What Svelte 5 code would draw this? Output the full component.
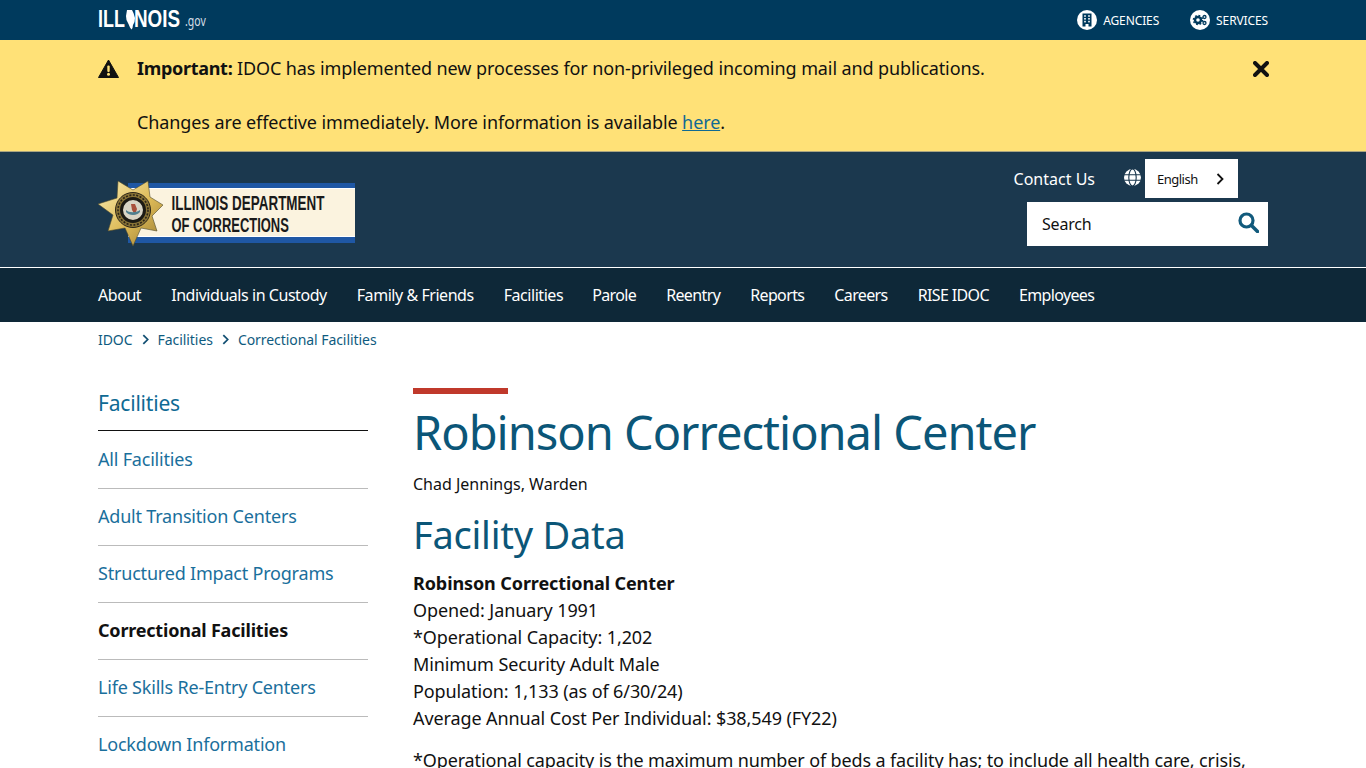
<script>
  const nav = ['About','Individuals in Custody','Family & Friends','Facilities','Parole','Reentry','Reports','Careers','RISE IDOC','Employees'];
  const side = [['All Facilities',0],['Adult Transition Centers',0],['Structured Impact Programs',0],['Correctional Facilities',1],['Life Skills Re-Entry Centers',0],['Lockdown Information',0]];
</script>

<div class="page">
  <div class="topbar">
    <div class="wrap row between">
      <svg class="illinois" viewBox="0 0 110 40" width="110" height="40">
        <text transform="translate(0 27) scale(.78 1)" class="ilt">ILL</text>
        <path d="M29 10h5l1.500 3 1.500 5-.5 4-1.500 3-.5 3-1 1.500-1.500-2-1.500-3.500-2-4-.5-4z" fill="#fff"/>
        <text transform="translate(36 27) scale(.82 1)" class="ilt">NOIS</text>
        <text transform="translate(87 26) scale(.7 1)" class="gv">.gov</text>
      </svg>
      <div class="row toplinks">
        <a class="tl"><span class="disc"><svg viewBox="0 0 20 20" width="20" height="20"><path d="M5.500 3.500h9v13h-3v-2.500h-3v2.500h-3z" fill="#003a5d"/><g fill="#fff"><rect x="7.200" y="5.200" width="1.600" height="1.600"/><rect x="11.200" y="5.200" width="1.600" height="1.600"/><rect x="7.200" y="8" width="1.600" height="1.600"/><rect x="11.200" y="8" width="1.600" height="1.600"/><rect x="7.200" y="10.800" width="1.600" height="1.600"/><rect x="11.200" y="10.800" width="1.600" height="1.600"/></g></svg></span>AGENCIES</a>
        <a class="tl"><span class="disc"><svg viewBox="0 0 20 20" width="20" height="20"><circle cx="8" cy="10" r="3" fill="none" stroke="#003a5d" stroke-width="2.400"/><circle cx="8" cy="10" r="4.600" fill="none" stroke="#003a5d" stroke-width="1.400" stroke-dasharray="1.800 1.800"/><circle cx="14.500" cy="7" r="1.500" fill="none" stroke="#003a5d" stroke-width="1.300"/><circle cx="14.500" cy="13" r="1.500" fill="none" stroke="#003a5d" stroke-width="1.300"/></svg></span>SERVICES</a>
      </div>
    </div>
  </div>

  <div class="alert">
    <div class="wrap alert-in">
      <svg class="warn" viewBox="0 0 21 19" width="21" height="19"><path d="M10.500 1 20.500 18.500H.5z" fill="#111" stroke="#111" stroke-width="1" stroke-linejoin="round"/><rect x="9.300" y="6.500" width="2.400" height="6.500" rx="1" fill="#ffe177"/><circle cx="10.500" cy="15.300" r="1.500" fill="#ffe177"/></svg>
      <div class="alert-text">
        <p><b>Important:</b> IDOC has implemented new processes for non-privileged incoming mail and publications.</p>
        <p>Changes are effective immediately. More information is available <a>here</a>.</p>
      </div>
      <svg class="close" viewBox="0 0 16 16" width="16" height="16"><path d="M2 2l12 12M14 2 2 14" stroke="#111" stroke-width="4" stroke-linecap="round"/></svg>
    </div>
  </div>

  <header class="masthead">
    <div class="wrap row between mast-in">
      <svg class="logo" viewBox="0 0 260 70" width="260" height="70">
        <defs>
          <linearGradient id="gold" x1="0" y1="0" x2="1" y2="1">
            <stop offset="0" stop-color="#fbeeb4"/><stop offset=".55" stop-color="#dcb956"/><stop offset="1" stop-color="#9a7c33"/>
          </linearGradient>
        </defs>
        <rect x="30" y="4" width="227" height="60" fill="#1f57a4"/>
        <rect x="30" y="9" width="227" height="49" fill="#fff"/>
        <rect x="30" y="10" width="227" height="47" fill="#fbf3df"/>
        <polygon points="20,2 35,11 50,2 52,18 65,26 54,37 59,52 43,49 35,67 27,49 10,52 15,36 0,25 19,19" fill="url(#gold)" stroke="#4f4a2c" stroke-width=".6"/>
        <circle cx="35" cy="31" r="17.500" fill="#8a7436" stroke="#2b2418" stroke-width="1"/>
        <circle cx="35" cy="31" r="15" fill="none" stroke="#2b2418" stroke-width="1.600" stroke-dasharray="2 1.500"/>
        <circle cx="35" cy="31" r="11.500" fill="#d9d5c6" stroke="#1c1a14" stroke-width="3"/>
        <path d="M33 25h4l2 5-2 6-3-5z" fill="#a8503c"/>
        <path d="M28 31c3 3 10 3 14 0v2c-3 4-11 4-14 0z" fill="#4f7f8f"/>
        <text transform="translate(73.500 30.500) scale(.69 1)" class="logot">ILLINOIS DEPARTMENT</text>
        <text transform="translate(73.500 53) scale(.665 1)" class="logot">OF CORRECTIONS</text>
      </svg>
      <div class="tools">
        <div class="row tools-top">
          <a class="contact">Contact Us</a>
          <svg class="globe" viewBox="0 0 17 17" width="17" height="17"><circle cx="8.500" cy="8.500" r="8.500" fill="#fff"/><g fill="none" stroke="#1b384e" stroke-width="1.100"><ellipse cx="8.500" cy="8.500" rx="3.700" ry="8.500"/><path d="M0 5.700h17M0 11.300h17"/></g></svg>
          <div class="lang"><span>English</span><svg viewBox="0 0 8 12" width="8" height="12"><path d="M1.500 1l5 5-5 5" fill="none" stroke="#111" stroke-width="1.800"/></svg></div>
        </div>
        <div class="search"><span>Search</span><svg viewBox="0 0 21 21" width="21" height="21"><circle cx="8.500" cy="8.500" r="6.500" fill="none" stroke="#115a7c" stroke-width="3.200"/><path d="M13.500 13.500l6 6" stroke="#115a7c" stroke-width="3.600" stroke-linecap="round"/></svg></div>
      </div>
    </div>
  </header>

  <nav class="mainnav"><div class="wrap row navrow">{#each nav as n}<a>{n}</a>{/each}</div></nav>

  <div class="wrap crumbs">
    <a>IDOC</a><svg viewBox="0 0 8 12" width="7" height="11"><path d="M1.500 1l5 5-5 5" fill="none" stroke="#124f72" stroke-width="2"/></svg><a>Facilities</a><svg viewBox="0 0 8 12" width="7" height="11"><path d="M1.500 1l5 5-5 5" fill="none" stroke="#124f72" stroke-width="2"/></svg><a>Correctional Facilities</a>
  </div>

  <div class="wrap content">
    <aside>
      <div class="side-h">Facilities</div>
      {#each side as [s, cur]}<div class="side-i" class:cur={cur}>{s}</div>{/each}
    </aside>
    <main>
      <div class="redbar"></div>
      <h1>Robinson Correctional Center</h1>
      <p class="warden">Chad Jennings, Warden</p>
      <h2>Facility Data</h2>
      <p class="data"><b>Robinson Correctional Center</b><br>Opened: January 1991<br>*Operational Capacity: 1,202<br>Minimum Security Adult Male<br>Population: 1,133 (as of 6/30/24)<br>Average Annual Cost Per Individual: $38,549 (FY22)</p>
      <p class="note">*Operational capacity is the maximum number of beds a facility has; to include all health care, crisis,</p>
    </main>
  </div>
</div>

<style>
  :global(html), :global(body) { margin: 0; height: 768px; overflow: hidden; background: #fff; }
  .page { font-family: "Noto Sans", "Open Sans", sans-serif; color: #111; height: 768px; overflow: hidden; }
  .wrap { width: 1170px; margin: 0 auto; box-sizing: border-box; }
  .row { display: flex; align-items: center; }
  .between { justify-content: space-between; }
  a { text-decoration: none; }

  .topbar { background: #003a5d; height: 40px; color: #fff; }
  .topbar .wrap { height: 40px; }
  .illinois { display: block; }
  .ilt { font-family: "Liberation Sans", sans-serif; font-weight: 700; font-size: 23px; fill: #fff; }
  .gv { font-family: "Noto Sans", sans-serif; font-size: 15px; fill: #d5dfe6; }
  .toplinks { gap: 31px; }
  .tl { display: flex; align-items: center; gap: 6px; font-size: 12px; letter-spacing: -.12px; color: #fff; }
  .disc { width: 20px; height: 20px; border-radius: 50%; background: #fff; display: block; }
  .disc svg { display: block; }

  .alert { background: #ffe177; height: 112px; box-sizing: border-box; border-bottom: 1px solid #aaa580; }
  .alert-in { display: flex; align-items: flex-start; padding-top: 15px; }
  .warn { margin-top: 4px; flex: none; }
  .alert-text { margin-left: 18px; font-size: 18px; line-height: 27px; flex: 1; letter-spacing: -.1px; }
  .alert-text b { letter-spacing: -.3px; }
  .alert-text p { margin: 0 0 27px; }
  .alert-text a { color: #0f6a94; text-decoration: underline; }
  .close { margin: 6px -1px 0 0; flex: none; }

  .masthead { background: #1b384e; height: 115px; border-bottom: 1px solid #fff; box-sizing: content-box; }
  .mast-in { height: 115px; align-items: flex-start; }
  .logo { margin-top: 27px; display: block; }
  .logot { font-family: "Liberation Sans", sans-serif; font-weight: 700; font-size: 19.500px; fill: #1a1a1a; }
  .tools { display: flex; flex-direction: column; align-items: flex-end; padding-top: 7px; }
  .tools-top { margin-right: 30px; height: 39px; }
  .contact { color: #fff; font-size: 16px; margin-right: 29px; }
  .globe { margin-right: 4px; margin-top: -3px; }
  .lang { background: #fff; width: 93px; height: 39px; box-sizing: border-box; padding: 0 14px 0 12px; display: flex; align-items: center; justify-content: space-between; font-size: 13px; letter-spacing: -.5px; }
  .search { margin-top: 4px; background: #fff; width: 241px; height: 44px; box-sizing: border-box; padding: 0 9px 3px 15px; display: flex; align-items: center; justify-content: space-between; font-size: 16px; letter-spacing: -.2px; }
  .search span { padding-top: 3px; }

  .mainnav { background: #0e2838; height: 54px; }
  .navrow { height: 54px; gap: 30px; }
  .navrow a { color: #fff; font-size: 16px; letter-spacing: -.45px; }
  .navrow a:nth-child(n+5) { letter-spacing: -.63px; }
  .navrow a:nth-child(5) { margin-left: -1px; }

  .crumbs { display: flex; align-items: center; height: 36px; font-size: 14px; letter-spacing: -.06px; padding-bottom: 2px; }
  .crumbs a { color: #0f5b80; }
  .crumbs svg { margin: 0 9px; }

  .content { display: flex; padding-top: 30px; }
  aside { width: 270px; flex: none; margin-right: 45px; }
  .side-h { font-size: 21px; letter-spacing: -.2px; color: #0f6a94; height: 42px; line-height: 30px; border-bottom: 1px solid #111; margin-bottom: 1px; }
  .side-i { font-size: 18px; letter-spacing: -.2px; color: #1a6f9c; height: 56px; line-height: 54px; border-bottom: 1px solid #bbb; }
  .side-i.cur { color: #111; font-weight: 700; }
  main { flex: 1; }
  .redbar { width: 95px; height: 6px; background: #c0392b; }
  h1 { margin: 6px 0 0; font-weight: 400; font-size: 47px; letter-spacing: -1px; line-height: 64px; color: #0b5678; }
  .warden { margin: 8px 0 0; font-size: 16px; line-height: 24px; }
  h2 { margin: 13px 0 0; font-weight: 400; font-size: 38px; letter-spacing: -.25px; line-height: 50px; color: #0b5678; }
  .data { margin: 11px 0 0; font-size: 18px; line-height: 27px; letter-spacing: -.1px; }
  .note { margin: 15px 0 0; font-size: 18px; line-height: 27px; letter-spacing: -.13px; white-space: nowrap; }
</style>
